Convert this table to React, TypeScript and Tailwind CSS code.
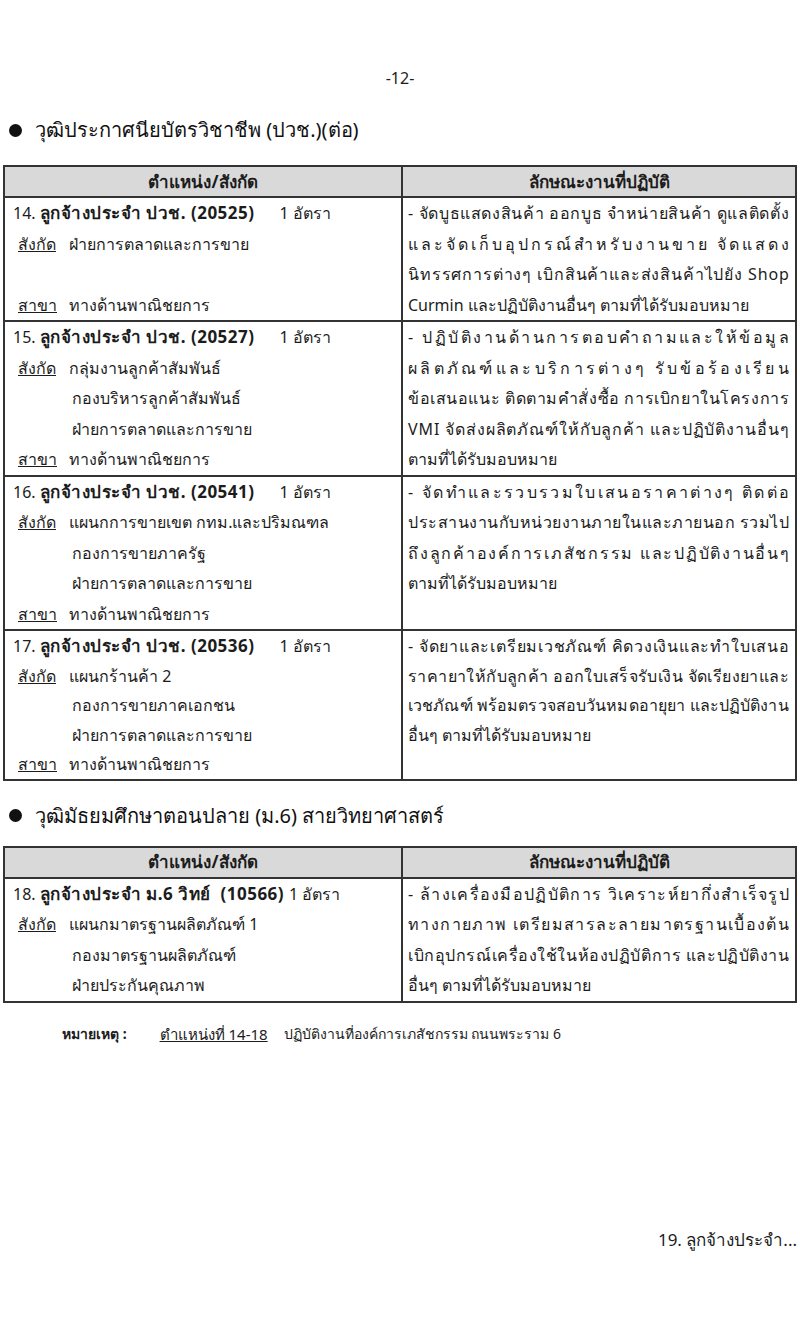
import React from "react"

type Row = {
  left: React.ReactNode[]
  right: string[]
  justify: number
  tight?: boolean
}

const font = { fontFamily: "Tahoma, 'Noto Sans', 'DejaVu Sans', sans-serif" }

const seg = new Intl.Segmenter("th", { granularity: "grapheme" })

// spreads a line over the whole cell, like Thai distributed alignment
function Spread({ text }: { text: string }) {
  const parts = Array.from(seg.segment(text), (s) => s.segment)
  return (
    <div className="h-[30.5px] flex justify-between whitespace-pre">
      {parts.map((p, i) => (
        <span key={i}>{p}</span>
      ))}
    </div>
  )
}

function Title({ no, code, name, near }: { no: string; code: string; name: string; near?: boolean }) {
  return (
    <div className="h-[30.5px] whitespace-nowrap">
      {no}{" "}
      <b className="text-[17px] tracking-[0.5px]">
        ลูกจ้างประจำ {name} ({code})
      </b>
      <span className={near ? "ml-[5px]" : "ml-[25px]"}>1 อัตรา</span>
    </div>
  )
}

function Label({ label, text }: { label: string; text: string }) {
  return (
    <div className="h-[30.5px] pl-[5px] whitespace-nowrap flex">
      <span className="underline w-[51px]">{label}</span>
      <span>{text}</span>
    </div>
  )
}

function Sub({ text }: { text: string }) {
  return <div className="h-[30.5px] pl-[59px] whitespace-nowrap">{text}</div>
}

const Blank = () => <div className="h-[30.5px]" />

const rows1: Row[] = [
  {
    left: [
      <Title key="t" no="14." name="ปวช." code="20525" />,
      <Label key="a" label="สังกัด" text="ฝ่ายการตลาดและการขาย" />,
      <Blank key="b" />,
      <Label key="c" label="สาขา" text="ทางด้านพาณิชยการ" />,
    ],
    right: [
      "- จัดบูธแสดงสินค้า ออกบูธ จำหน่ายสินค้า ดูแลติดตั้ง",
      "และจัดเก็บอุปกรณ์สำหรับงานขาย จัดแสดง",
      "นิทรรศการต่างๆ เบิกสินค้าและส่งสินค้าไปยัง Shop",
      "Curmin และปฏิบัติงานอื่นๆ ตามที่ได้รับมอบหมาย",
    ],
    justify: 3,
  },
  {
    left: [
      <Title key="t" no="15." name="ปวช." code="20527" />,
      <Label key="a" label="สังกัด" text="กลุ่มงานลูกค้าสัมพันธ์" />,
      <Sub key="b" text="กองบริหารลูกค้าสัมพันธ์" />,
      <Sub key="c" text="ฝ่ายการตลาดและการขาย" />,
      <Label key="d" label="สาขา" text="ทางด้านพาณิชยการ" />,
    ],
    right: [
      "- ปฏิบัติงานด้านการตอบคำถามและให้ข้อมูล",
      "ผลิตภัณฑ์และบริการต่างๆ รับข้อร้องเรียน",
      "ข้อเสนอแนะ ติดตามคำสั่งซื้อ การเบิกยาในโครงการ",
      "VMI จัดส่งผลิตภัณฑ์ให้กับลูกค้า และปฏิบัติงานอื่นๆ",
      "ตามที่ได้รับมอบหมาย",
    ],
    justify: 4,
  },
  {
    left: [
      <Title key="t" no="16." name="ปวช." code="20541" />,
      <Label key="a" label="สังกัด" text="แผนกการขายเขต กทม.และปริมณฑล" />,
      <Sub key="b" text="กองการขายภาครัฐ" />,
      <Sub key="c" text="ฝ่ายการตลาดและการขาย" />,
      <Label key="d" label="สาขา" text="ทางด้านพาณิชยการ" />,
    ],
    right: [
      "- จัดทำและรวบรวมใบเสนอราคาต่างๆ ติดต่อ",
      "ประสานงานกับหน่วยงานภายในและภายนอก รวมไป",
      "ถึงลูกค้าองค์การเภสัชกรรม และปฏิบัติงานอื่นๆ",
      "ตามที่ได้รับมอบหมาย",
    ],
    justify: 3,
  },
  {
    left: [
      <Title key="t" no="17." name="ปวช." code="20536" />,
      <Label key="a" label="สังกัด" text="แผนกร้านค้า 2" />,
      <Sub key="b" text="กองการขายภาคเอกชน" />,
      <Sub key="c" text="ฝ่ายการตลาดและการขาย" />,
      <Label key="d" label="สาขา" text="ทางด้านพาณิชยการ" />,
    ],
    right: [
      "- จัดยาและเตรียมเวชภัณฑ์ คิดวงเงินและทำใบเสนอ",
      "ราคายาให้กับลูกค้า ออกใบเสร็จรับเงิน จัดเรียงยาและ",
      "เวชภัณฑ์ พร้อมตรวจสอบวันหมดอายุยา และปฏิบัติงาน",
      "อื่นๆ ตามที่ได้รับมอบหมาย",
    ],
    justify: 3,
    tight: true,
  },
]

const rows2: Row[] = [
  {
    left: [
      <Title key="t" no="18." name={"ม.6 วิทย์\u00a0"} code="10566" near />,
      <Label key="a" label="สังกัด" text="แผนกมาตรฐานผลิตภัณฑ์ 1" />,
      <Sub key="b" text="กองมาตรฐานผลิตภัณฑ์" />,
      <Sub key="c" text="ฝ่ายประกันคุณภาพ" />,
    ],
    right: [
      "- ล้างเครื่องมือปฏิบัติการ วิเคราะห์ยากึ่งสำเร็จรูป",
      "ทางกายภาพ เตรียมสารละลายมาตรฐานเบื้องต้น",
      "เบิกอุปกรณ์เครื่องใช้ในห้องปฏิบัติการ และปฏิบัติงาน",
      "อื่นๆ ตามที่ได้รับมอบหมาย",
    ],
    justify: 3,
  },
]

function JobTable({ rows }: { rows: Row[] }) {
  return (
    <table className="mx-[3px] w-[794px] table-fixed border-collapse text-[16px] leading-[30.5px] text-[#1c1c1c]">
      <thead>
        <tr className="bg-[#d9d9d9]">
          <th className="w-[398px] h-[31px] leading-[26px] border-2 border-[#333] text-[17px] font-bold">
            ตำแหน่ง/สังกัด
          </th>
          <th className="h-[31px] leading-[26px] border-2 border-[#333] text-[17px] font-bold">
            ลักษณะงานที่ปฏิบัติ
          </th>
        </tr>
      </thead>
      <tbody>
        {rows.map((r, i) => (
          <tr key={i} className={r.tight ? "[&_div]:h-[29.5px]" : ""}>
            <td className="border-2 border-[#333] align-top pl-[8px] pr-1">{r.left}</td>
            <td className="border-2 border-[#333] align-top pl-[5px] pr-[6px]">
              {r.right.map((line, j) =>
                j < r.justify ? (
                  <Spread key={j} text={line} />
                ) : (
                  <div key={j} className="h-[30.5px] whitespace-nowrap">
                    {line}
                  </div>
                )
              )}
            </td>
          </tr>
        ))}
      </tbody>
    </table>
  )
}

function Heading({ text }: { text: string }) {
  return (
    <div className="flex items-center h-[30px] pl-[9px] text-[20px] text-[#111]">
      <span className="w-[13px] h-[13px] rounded-full bg-[#111] mr-[13px]" />
      <span>{text}</span>
    </div>
  )
}

export default function App() {
  return (
    <div className="w-[800px] h-[1336px] bg-white text-[#1c1c1c]" style={font}>
      <div className="pt-[66px] h-[90px] text-center text-[16px]">-12-</div>
      <div className="mt-[25px]">
        <Heading text="วุฒิประกาศนียบัตรวิชาชีพ (ปวช.)(ต่อ)" />
      </div>
      <div className="mt-[20px]">
        <JobTable rows={rows1} />
      </div>
      <div className="mt-[20px]">
        <Heading text="วุฒิมัธยมศึกษาตอนปลาย (ม.6) สายวิทยาศาสตร์" />
      </div>
      <div className="mt-[15px]">
        <JobTable rows={rows2} />
      </div>
      <div className="mt-[20px] pl-[62px] flex items-center text-[14px] whitespace-nowrap">
        <b className="mr-[33px]">หมายเหตุ :</b>
        <span className="underline text-[15px] mr-[16px]">ตำแหน่งที่ 14-18</span>
        <span>ปฏิบัติงานที่องค์การเภสัชกรรม ถนนพระราม 6</span>
      </div>
      <div className="mt-[182px] pr-[3px] text-right text-[17px]">19. ลูกจ้างประจำ...</div>
    </div>
  )
}
